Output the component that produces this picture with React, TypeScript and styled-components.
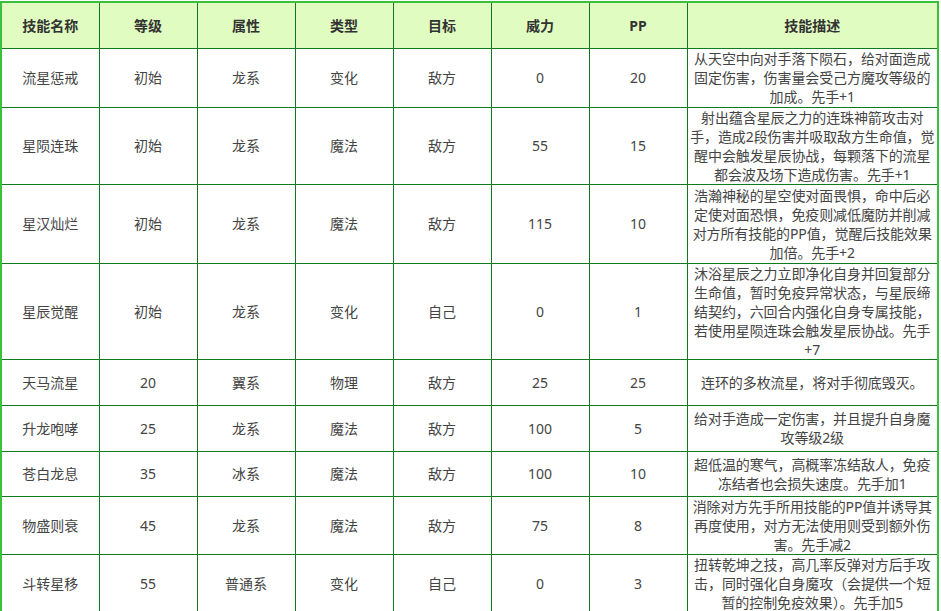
import styled, { createGlobalStyle } from "styled-components";

interface ISkill
{
    name: string;
    level: string;
    attr: string;
    kind: string;
    target: string;
    power: string;
    pp: string;
    desc: string;
    h: number;
}

const SKILLS: ISkill[] = [
    { name: "流星惩戒", level: "初始", attr: "龙系", kind: "变化", target: "敌方", power: "0", pp: "20", h: 59,
        desc: "从天空中向对手落下陨石，给对面造成固定伤害，伤害量会受己方魔攻等级的加成。先手+1" },
    { name: "星陨连珠", level: "初始", attr: "龙系", kind: "魔法", target: "敌方", power: "55", pp: "15", h: 76,
        desc: "射出蕴含星辰之力的连珠神箭攻击对手，造成2段伤害并吸取敌方生命值，觉醒中会触发星辰协战，每颗落下的流星都会波及场下造成伤害。先手+1" },
    { name: "星汉灿烂", level: "初始", attr: "龙系", kind: "魔法", target: "敌方", power: "115", pp: "10", h: 79,
        desc: "浩瀚神秘的星空使对面畏惧，命中后必定使对面恐惧，免疫则减低魔防并削减对方所有技能的PP值，觉醒后技能效果加倍。先手+2" },
    { name: "星辰觉醒", level: "初始", attr: "龙系", kind: "变化", target: "自己", power: "0", pp: "1", h: 95,
        desc: "沐浴星辰之力立即净化自身并回复部分生命值，暂时免疫异常状态，与星辰缔结契约，六回合内强化自身专属技能，若使用星陨连珠会触发星辰协战。先手+7" },
    { name: "天马流星", level: "20", attr: "翼系", kind: "物理", target: "敌方", power: "25", pp: "25", h: 46,
        desc: "连环的多枚流星，将对手彻底毁灭。" },
    { name: "升龙咆哮", level: "25", attr: "龙系", kind: "魔法", target: "敌方", power: "100", pp: "5", h: 46,
        desc: "给对手造成一定伤害，并且提升自身魔攻等级2级" },
    { name: "苍白龙息", level: "35", attr: "冰系", kind: "魔法", target: "敌方", power: "100", pp: "10", h: 45,
        desc: "超低温的寒气，高概率冻结敌人，免疫冻结者也会损失速度。先手加1" },
    { name: "物盛则衰", level: "45", attr: "龙系", kind: "魔法", target: "敌方", power: "75", pp: "8", h: 58,
        desc: "消除对方先手所用技能的PP值并诱导其再度使用，对方无法使用则受到额外伤害。先手减2" },
    { name: "斗转星移", level: "55", attr: "普通系", kind: "变化", target: "自己", power: "0", pp: "3", h: 57,
        desc: "扭转乾坤之技，高几率反弹对方后手攻击，同时强化自身魔攻（会提供一个短暂的控制免疫效果）。先手加5" },
];

const HEADERS = ["技能名称", "等级", "属性", "类型", "目标", "威力", "PP", "技能描述"];



function App()
{
    return (
        <>
            <GlobalStyle/>
            <SkillTable>
                <colgroup>
                    {HEADERS.map((t, i) => (
                        <col key={t} style={{ width: i === 7 ? 251 : 98 }}/>
                    ))}
                </colgroup>
                <thead>
                    <HeadRow>
                        {HEADERS.map(t => <HeadCell key={t}>{t}</HeadCell>)}
                    </HeadRow>
                </thead>
                <tbody>
                    {SKILLS.map(s => (
                        <BodyRow key={s.name} $h={s.h}>
                            <Cell>{s.name}</Cell>
                            <Cell>{s.level}</Cell>
                            <Cell>{s.attr}</Cell>
                            <Cell>{s.kind}</Cell>
                            <Cell>{s.target}</Cell>
                            <Cell>{s.power}</Cell>
                            <Cell>{s.pp}</Cell>
                            <DescCell>{s.desc}</DescCell>
                        </BodyRow>
                    ))}
                </tbody>
            </SkillTable>
        </>
    )
}


const GlobalStyle = createGlobalStyle`
    body {
        margin: 0;
        background: #ffffff;
        font-family: "Noto Sans", "Noto Sans CJK SC", sans-serif;
    }
`
const SkillTable = styled.table`
    margin-top: 1px;
    width: 937px;
    table-layout: fixed;
    border-collapse: collapse;
    border: 2px solid #3cbf3c;
    font-size: 14px;
    color: #444444;
`
const HeadRow = styled.tr`
    height: 46px;
    background: #e0fcc0;
`
const HeadCell = styled.th`
    border: 1px solid #0f7a20;
    padding: 0 4px;
    font-weight: bold;
    color: #333333;
    text-align: center;
`
const BodyRow = styled.tr<{ $h: number }>`
    height: ${p => p.$h}px;
`
const Cell = styled.td`
    border: 1px solid #0f7a20;
    padding: 0 4px;
    text-align: center;
    line-height: 19px;
`
const DescCell = styled(Cell)`
    padding: 0;
    letter-spacing: -0.1px;
`



export default App;
